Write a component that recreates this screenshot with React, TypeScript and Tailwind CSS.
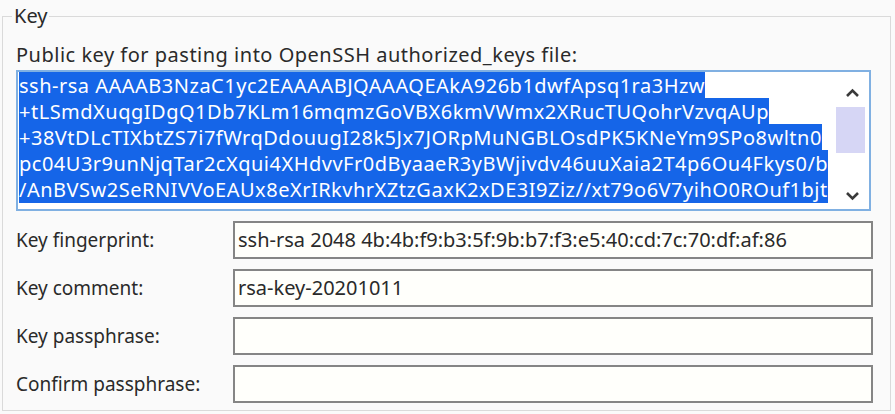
const keyLines = [
    "ssh-rsa AAAAB3NzaC1yc2EAAAABJQAAAQEAkA926b1dwfApsq1ra3Hzw",
    "+tLSmdXuqgIDgQ1Db7KLm16mqmzGoVBX6kmVWmx2XRucTUQohrVzvqAUp",
    "+38VtDLcTIXbtZS7i7fWrqDdouugI28k5Jx7JORpMuNGBLOsdPK5KNeYm9SPo8wltn0",
    "pc04U3r9unNjqTar2cXqui4XHdvvFr0dByaaeR3yBWjivdv46uuXaia2T4p6Ou4Fkys0/b",
    "/AnBVSw2SeRNIVVoEAUx8eXrIRkvhrXZtzGaxK2xDE3I9Ziz//xt79o6V7yihO0ROuf1bjt",
];

const fields = [
    { label: "Key fingerprint:", value: "ssh-rsa 2048 4b:4b:f9:b3:5f:9b:b7:f3:e5:40:cd:7c:70:df:af:86" },
    { label: "Key comment:", value: "rsa-key-20201011" },
    { label: "Key passphrase:", value: "" },
    { label: "Confirm passphrase:", value: "" },
];

function ScrollBar() {
    return (
        <div className="mr-[4px] flex w-[30px] flex-col items-center bg-white">
            <svg width="15" height="10" viewBox="0 0 15 10" className="mt-[16px] ml-[4px]">
                <path d="M2 8 L7.5 2.5 L13 8" fill="none" stroke="#3a3a3a" strokeWidth="2.6" />
            </svg>
            <div className="mt-[9px] h-[46px] w-[29px] bg-[#d6d6f5]" />
            <div className="flex-1" />
            <svg width="15" height="10" viewBox="0 0 15 10" className="mb-[8px] ml-[4px]">
                <path d="M2 2 L7.5 7.5 L13 2" fill="none" stroke="#3a3a3a" strokeWidth="2.6" />
            </svg>
        </div>
    );
}

function App() {
    return (
        <div className="h-[414px] w-[895px] overflow-hidden bg-[#fafafa] font-['Noto_Sans','Open_Sans',sans-serif] text-[#2a2a2a]">
            <fieldset className="ml-[2px] mt-[4px] h-[407px] w-[889px] border border-[#dadada] pl-[13px] pr-[17px]">
                <legend className="ml-[-4px] px-[2px] text-[20px] leading-[24px]">Key</legend>
                <p className="mt-[15px] text-[20px] leading-[24px] tracking-[0.5px]">
                    Public key for pasting into OpenSSH authorized_keys file:
                </p>
                <div className="mt-[3px] flex h-[141px] w-[855px] border-2 border-[#80b0e2] bg-white">
                    <div className="flex-1 pl-[1px] pt-[1px] text-[20px] leading-[26px] tracking-[0.5px] text-white">
                        {keyLines.map((line) => (
                            <div key={line} className="whitespace-nowrap">
                                <span className="bg-[#1565e8]">{line}</span>
                            </div>
                        ))}
                    </div>
                    <ScrollBar />
                </div>
                <div className="mt-[10px] flex flex-col gap-[10px]">
                    {fields.map((f) => (
                        <div key={f.label} className="flex items-center">
                            <span className="w-[217px] text-[19px] leading-[24px]">{f.label}</span>
                            <div className="flex h-[38px] w-[640px] items-center border-2 border-[#858585] bg-[#fffffb] px-[3px] text-[20px]">
                                {f.value}
                            </div>
                        </div>
                    ))}
                </div>
            </fieldset>
        </div>
    );
}

export default App;
